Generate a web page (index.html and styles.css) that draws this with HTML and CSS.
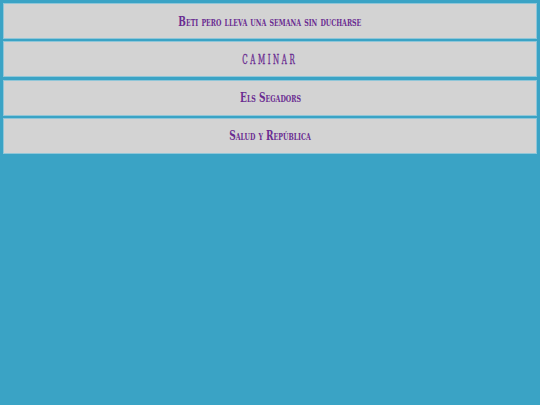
FILE: index.html
```html
<!DOCTYPE html>
<html>
<head>
<meta charset="utf-8">
<link rel="stylesheet" href="styles.css">
</head>
<body>
<ul class="menu">
  <li class="item"><span class="label">Beti pero lleva una semana sin ducharse</span></li>
  <li class="item"><span class="label spaced">CAMINAR</span></li>
  <li class="item"><span class="label">Els Segadors</span></li>
  <li class="item"><span class="label">Salud y República</span></li>
</ul>
</body>
</html>
```
FILE: styles.css
```css
html, body {
  margin: 0;
  padding: 0;
  background: #3aa3c5;
}
body {
  padding: 3px;
  font-family: "DejaVu Serif Condensed", "DejaVu Serif", serif;
}
.menu {
  list-style: none;
  margin: 0;
  padding: 0;
  display: flex;
  flex-direction: column;
  gap: 2.33px;
}
.item {
  height: 36px;
  box-sizing: border-box;
  background: #d3d3d3;
  border: 1px solid #8fc6d8;
  display: flex;
  align-items: center;
  justify-content: center;
}
.label {
  display: inline-block;
  color: #6a2c91;
  font-size: 13px;
  font-weight: bold;
  font-variant: small-caps;
  transform: scaleX(0.77);
}
.spaced {
  font-weight: normal;
  letter-spacing: 4.3px;
  transform: scaleX(0.6);
  -webkit-text-stroke: 0.35px #6a2c91;
}
```
